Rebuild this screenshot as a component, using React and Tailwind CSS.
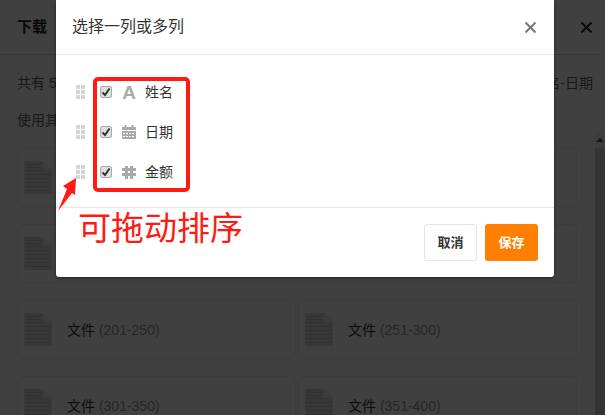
const FONT = "font-['Liberation_Sans','Noto_Sans_CJK_SC',sans-serif]";

// 前两行的文字被弹窗挡住，这里只留卡片
const FILES = [
  [null, null],
  [null, null],
  ['201-250', '251-300'],
  ['301-350', '351-400'],
];

const COLUMNS = [
  { name: '姓名', icon: 'text' },
  { name: '日期', icon: 'date' },
  { name: '金额', icon: 'number' },
];

function DocIcon() {
  return (
    <svg width="28" height="33" viewBox="0 0 28 33" className="shrink-0">
      <path d="M0 0H19L28 9V33H0Z" fill="#dcdcdc" />
      <path d="M19 0L28 9H19Z" fill="#ececec" />
      <path d="M2 3.5H17M2 6.5H17M2 9.5H18M2 13.5H26M2 17.5H26M2 21.5H26M2 25.5H26M2 29.5H26" stroke="#c0c0c0" strokeWidth="1" />
    </svg>
  );
}

function FileCard({ range }) {
  return (
    <div className="flex h-[59px] w-[279px] items-center gap-[15px] rounded-[4px] border border-[#f0f0f0] pl-[6px] text-[14px]">
      <DocIcon />
      {range && (
        <span className="pt-[1px] text-[#333]">
          文件 <span className="text-[#999]">({range})</span>
        </span>
      )}
    </div>
  );
}

function Grip() {
  return (
    <div className="grid w-[9px] grid-cols-2 gap-[1px]">
      {[0, 1, 2, 3, 4, 5].map((i) => (
        <span key={i} className="size-[4px] bg-[#d4d4d4]" />
      ))}
    </div>
  );
}

function Checkbox() {
  return (
    <span className="flex size-[12px] items-center justify-center rounded-[2px] border border-[#aaa] bg-[#dedede]">
      <svg width="10" height="10" viewBox="0 0 10 10">
        <path d="M1.5 5.5L4 8L8.5 1.5" fill="none" stroke="#333" strokeWidth="2" />
      </svg>
    </span>
  );
}

function ColumnIcon({ type }) {
  if (type === 'text') {
    return <span className="w-[14px] text-center text-[19px] leading-none font-bold text-[#aaa]">A</span>;
  }
  if (type === 'date') {
    return (
      <svg width="14" height="14" viewBox="0 0 14 14">
        <path d="M0 2H14V14H0Z" fill="#aaa" />
        <path d="M3.5 0V3M10.5 0V3" stroke="#aaa" strokeWidth="2" />
        <path d="M0 5.5H14" stroke="#fff" strokeWidth="1" />
        <path d="M1 8.5H13M1 11.5H13" stroke="#fff" strokeWidth="1" strokeDasharray="2 1" />
      </svg>
    );
  }
  return (
    <svg width="14" height="14" viewBox="0 0 14 14">
      <path d="M4.5 1V14M9.5 1V14M0 4.5H14M0 9.5H14" stroke="#aaa" strokeWidth="3" />
    </svg>
  );
}

function CloseIcon({ color }) {
  return (
    <svg width="11" height="11" viewBox="0 0 11 11">
      <path d="M0.5 0.5L10.5 10.5M10.5 0.5L0.5 10.5" stroke={color} strokeWidth="2" />
    </svg>
  );
}

function ColumnDialog() {
  return (
    <div className="absolute top-0 left-[56px] w-[498px] rounded-b-[3px] bg-white shadow-[0_1px_3px_rgba(0,0,0,0.5)]">
      <div className="flex h-[55px] items-center justify-between border-b border-[#e8e8e8] pr-[18px] pl-[16px]">
        <span className="text-[16px] text-[#333]">选择一列或多列</span>
        <CloseIcon color="#777" />
      </div>

      <div className="flex h-[152px] flex-col gap-[20px] pt-[27px] pl-[20px]">
        {COLUMNS.map(({ name, icon }) => (
          <div key={name} className="flex h-[20px] items-center">
            <Grip />
            <div className="ml-[15px] flex items-center">
              <Checkbox />
            </div>
            <div className="ml-[10px] flex w-[14px] justify-center">
              <ColumnIcon type={icon} />
            </div>
            <span className="ml-[9px] text-[14px] text-[#333]">{name}</span>
          </div>
        ))}
      </div>

      <div className="flex h-[70px] items-start justify-end gap-[8px] border-t border-[#e8e8e8] pt-[16px] pr-[16px]">
        <button className="h-[37px] w-[53px] rounded-[3px] border border-[#e3e5ea] bg-white text-[13px] font-bold text-[#333]">
          取消
        </button>
        <button className="h-[37px] w-[53px] rounded-[3px] bg-[#ff8000] text-[13px] font-bold text-white">
          保存
        </button>
      </div>
    </div>
  );
}

export default function App() {
  return (
    <div className={`${FONT} relative h-[415px] w-[605px] overflow-hidden bg-white`}>
      <div className="flex h-[55px] items-center justify-between border-b border-[#ddd] pr-[13px] pl-[17px]">
        <span className="text-[15px] font-bold text-[#222]">下载</span>
        <CloseIcon color="#222" />
      </div>
      <div className="flex justify-between pt-[19px] pr-[12px] pl-[17px] text-[14px] leading-[18px] text-[#666]">
        <span>共有 5</span>
        <span>名-日期</span>
      </div>
      <div className="h-[39px] pt-[19px] pl-[17px] text-[14px] leading-[18px] text-[#666]">使用其</div>

      <div className="flex h-[284px]">
        <div className="flex min-w-0 flex-1 flex-col gap-[17px] pt-[17px] pl-[17px]">
          {FILES.map((row, i) => (
            <div key={i} className="flex gap-[2px]">
              {row.map((range, j) => (
                <FileCard key={j} range={range} />
              ))}
            </div>
          ))}
        </div>
        <div className="flex w-[10px] shrink-0 flex-col bg-[#cfcfcf]">
          <div className="flex h-[17px] items-center justify-center bg-[#f4f4f4]">
            <span className="border-x-[4px] border-b-[4px] border-x-transparent border-b-[#555]" />
          </div>
        </div>
      </div>

      {/* 遮罩 */}
      <div className="absolute inset-0 bg-black/75" />
      <ColumnDialog />

      {/* 截图上的红色标注 */}
      <div className="absolute top-[77px] left-[93px] h-[115px] w-[97px] rounded-[5px] border-[4px] border-[#ff1a12]" />
      <svg className="absolute top-0 left-0" width="100" height="220">
        <path d="M76 178L63 186L67 189L58 211L72 193L75 195Z" fill="#ff1a12" />
      </svg>
      <span className="absolute top-[206px] left-[78px] text-[33px] leading-[46px] text-[#ff1a12]">可拖动排序</span>
    </div>
  );
}
